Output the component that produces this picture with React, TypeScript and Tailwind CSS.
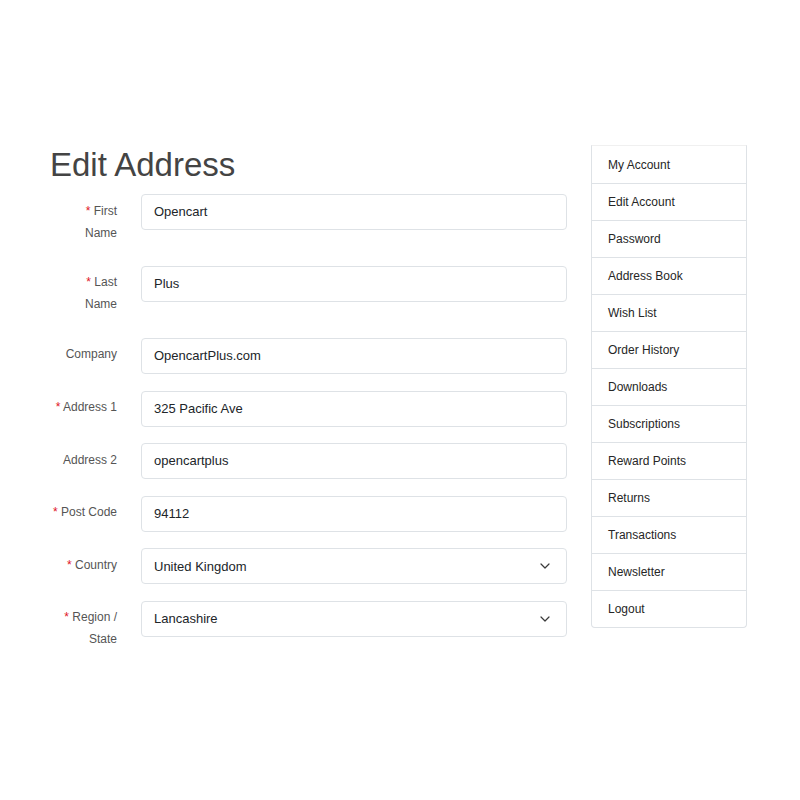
import { ChevronDown } from 'lucide-react'

const fields = [
  { label: ['First', 'Name'], value: 'Opencart', required: true },
  { label: ['Last', 'Name'], value: 'Plus', required: true },
  { label: ['Company'], value: 'OpencartPlus.com', required: false },
  { label: ['Address 1'], value: '325 Pacific Ave', required: true },
  { label: ['Address 2'], value: 'opencartplus', required: false },
  { label: ['Post Code'], value: '94112', required: true },
  { label: ['Country'], value: 'United Kingdom', required: true, select: true },
  { label: ['Region /', 'State'], value: 'Lancashire', required: true, select: true },
]

const links = [
  'My Account',
  'Edit Account',
  'Password',
  'Address Book',
  'Wish List',
  'Order History',
  'Downloads',
  'Subscriptions',
  'Reward Points',
  'Returns',
  'Transactions',
  'Newsletter',
  'Logout',
]

function Field({ field }: { field: (typeof fields)[number] }) {
  return (
    <div className="flex mb-[16.6px]">
      <div className="w-[67px] shrink-0 text-right text-[12px] leading-[22px] text-[#555] pt-[5.5px] pb-[5.9px]">
        {field.label.map((line, i) => (
          <div key={line}>
            {i === 0 && field.required && <span className="text-[#e0141e]">* </span>}
            {line}
          </div>
        ))}
      </div>
      <div className="ml-[24px] w-[426px] h-[36px] border border-[#dee2e6] rounded-[4px] bg-white flex items-center justify-between pl-[12px] pr-[13px] text-[13px] text-[#212529]">
        <span>{field.value}</span>
        {field.select && <ChevronDown className="w-[16px] h-[16px] text-[#3a3a3a]" strokeWidth={1.8} />}
      </div>
    </div>
  )
}

export default function App() {
  return (
    <div className="min-h-[800px] bg-white pt-[146px] pl-[50px] font-['Liberation_Sans',Arial,sans-serif]">
      <div className="flex items-start w-[697px]">
        <div className="w-[517px]">
          <h1 className="text-[33px] leading-[38px] text-[#444] mb-[10px]">Edit Address</h1>
          {fields.map((f) => (
            <Field key={f.value} field={f} />
          ))}
        </div>
        <div className="ml-[24px] -mt-[1px] w-[156px] border-x border-b border-t border-t-[#f0f0f0] border-[#dee2e6] rounded-b-[4px]">
          {links.map((l, i) => (
            <div
              key={l}
              className={`h-[37px] flex items-center pl-[16px] text-[12px] text-[#262626] ${i > 0 ? 'border-t border-[#dee2e6]' : ''}`}
            >
              {l}
            </div>
          ))}
        </div>
      </div>
    </div>
  )
}
